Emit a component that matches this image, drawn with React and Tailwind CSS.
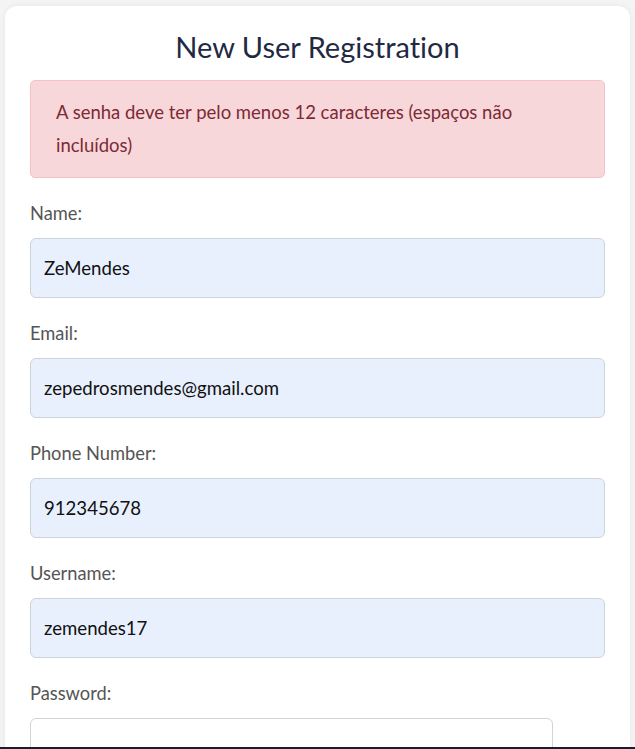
import React from "react";

const fields = [
  { label: "Name:", value: "ZeMendes" },
  { label: "Email:", value: "zepedrosmendes@gmail.com" },
  { label: "Phone Number:", value: "912345678" },
  { label: "Username:", value: "zemendes17" },
];

const App = () => {
  return (
    <div
      className="h-[749px] overflow-hidden bg-[#f4f4f5] border-b-2 border-[#1b1b2b] px-[5px] pt-[6px] [font-variant-ligatures:none]"
      style={{ fontFamily: "Lato, 'Open Sans', sans-serif" }}
    >
      <div className="bg-white rounded-[12px] shadow-[0_0_6px_rgba(0,0,0,0.06)] px-[25px] pt-[25px] pb-8">
        <h1 className="text-center text-[29px] leading-[32px] text-[#1f2a44] mb-[17px]">
          New User Registration
        </h1>

        {/* error alert */}
        <div className="bg-[#f8d7da] border border-[#f5c2c7] rounded-[5px] pl-[25px] pr-[70px] py-[15px] text-[18.5px] leading-[33px] text-[#7c2a36] mb-[23px]">
          A senha deve ter pelo menos 12 caracteres (espaços não incluídos)
        </div>

        {fields.map(({ label, value }) => (
          <div key={label} className="mb-[23px]">
            <label className="block text-[18.3px] leading-[24px] text-[#555] mb-[13px]">
              {label}
            </label>
            <input
              readOnly
              value={value}
              className="w-full h-[60px] bg-[#e8f0fe] border border-[#ced4da] rounded-[6px] px-[13px] text-[18.6px] text-[#111] outline-none"
              style={{ fontFamily: "inherit" }}
            />
          </div>
        ))}

        <div>
          <label className="block text-[18.3px] leading-[24px] text-[#555] mb-[13px]">
            Password:
          </label>
          <input
            type="password"
            readOnly
            className="w-[523px] h-[60px] bg-white border border-[#ced4da] rounded-[6px] px-[13px] outline-none"
          />
        </div>
      </div>
    </div>
  );
};

export default App;
